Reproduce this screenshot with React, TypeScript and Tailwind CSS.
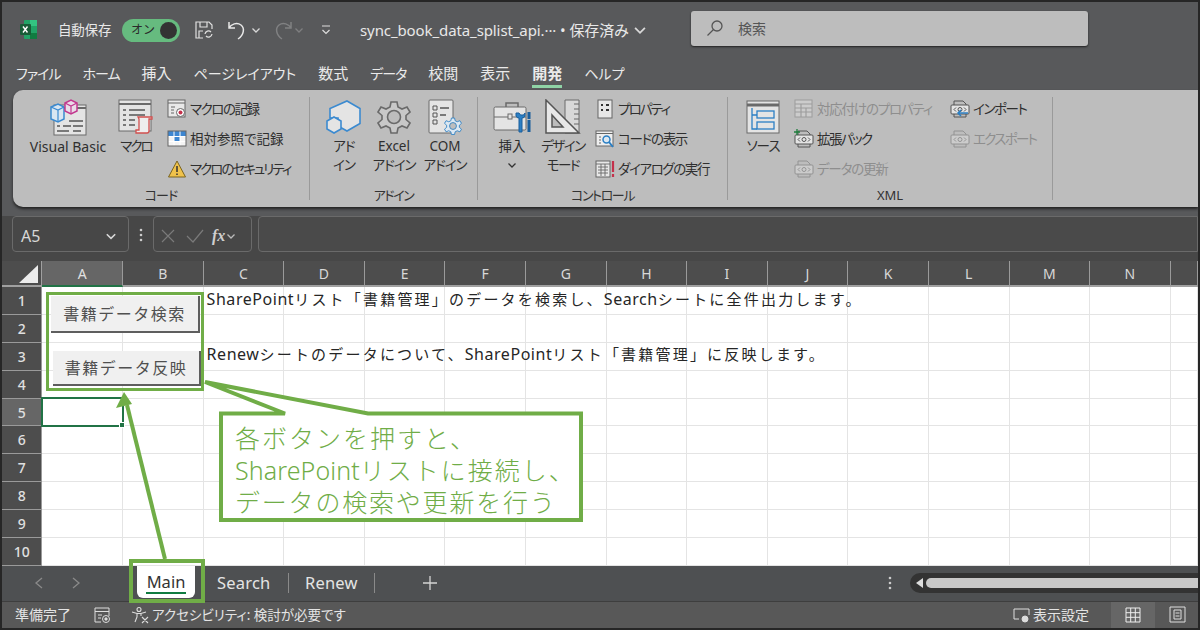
import React from "react";

const G = "#70ad47";

function Large({ w, label, icon, ml = "" }: { w: string; label: React.ReactNode; icon: React.ReactNode; ml?: string }) {
  return (
    <div className={`flex flex-col items-center shrink-0 ${w} ${ml}`}>
      <div className="h-[40px] flex items-center justify-center">{icon}</div>
      <div className="text-[13.5px] leading-[19px] text-center text-[#2f2f2f] whitespace-nowrap [font-feature-settings:'palt']">{label}</div>
    </div>
  );
}

function Small({ icon, label, off = false, t = "" }: { icon: React.ReactNode; label: string; off?: boolean; t?: string }) {
  return (
    <div className="h-[30px] flex items-center whitespace-nowrap">
      <div className="w-[20px] h-[20px] mr-[3px] flex items-center justify-center shrink-0">{icon}</div>
      <span className={`text-[13.5px] [font-feature-settings:'palt'] ${t} ${off ? "text-[#8e8e8e]" : "text-[#2f2f2f]"}`}>{label}</span>
    </div>
  );
}

function Group({ w, label, t = "", children }: { w: string; label: string; t?: string; children: React.ReactNode }) {
  return (
    <div className={`shrink-0 ${w} h-[103px] border-r border-[#9a9a9a] flex flex-col`}>
      <div className="flex-1 flex min-h-0">{children}</div>
      <div className={`text-center text-[13px] leading-[16px] text-[#333] -mb-[3px] [font-feature-settings:'palt'] ${t}`}>{label}</div>
    </div>
  );
}

const IconVB = () => (
  <svg width="38" height="38" viewBox="0 0 38 38" fill="none">
    <rect x="5" y="7" width="32" height="30" fill="#e4e4e4" stroke="#6a6a6a" />
    <path d="M5 10h32" stroke="#6a6a6a" strokeWidth="2" />
    <path d="M8 28h3M14 28h8M8 33h12M24 33h8M20 23h14M24 28h10" stroke="#555" strokeWidth="1.5" />
    <path d="M2 9l7-3 6 3v12l-6 3-7-3z" fill="#d9e6f2" stroke="#3b8ad0" strokeWidth="1.5" />
    <path d="M2 9l7 3 6-3M9 12v12" stroke="#3b8ad0" strokeWidth="1.2" />
    <path d="M16 5l6-3 6 3v8l-6 3-6-3z" fill="#eadce8" stroke="#c2388f" strokeWidth="1.5" />
    <path d="M16 5l6 3 6-3M22 8v8" stroke="#c2388f" strokeWidth="1.2" />
  </svg>
);
const IconMacro = () => (
  <svg width="36" height="36" viewBox="0 0 36 36" fill="none">
    <rect x="1" y="1" width="32" height="31" fill="#e4e4e4" stroke="#6a6a6a" />
    <path d="M1 5h32" stroke="#6a6a6a" strokeWidth="2" />
    <path d="M5 11h3M11 11h16M5 16h3M11 16h16M5 21h3M11 21h6M5 26h3M11 26h6" stroke="#555" strokeWidth="1.5" />
    <path d="M20 18h14v2h-3v12a2 2 0 01-2 2H18v-3h3V20z" fill="#eee" stroke="#d1504f" strokeWidth="1.3" />
  </svg>
);
const IconRec = () => (
  <svg width="20" height="20" viewBox="0 0 20 20" fill="none">
    <rect x="1" y="1" width="17" height="17" fill="#e8e8e8" stroke="#666" />
    <path d="M1 4h17M4 8h4M4 11h3M4 14h3" stroke="#666" />
    <circle cx="13.5" cy="13.5" r="4" fill="#fff" stroke="#666" />
    <circle cx="13.5" cy="13.5" r="2" fill="#c4314b" />
  </svg>
);
const IconRel = () => (
  <svg width="20" height="20" viewBox="0 0 20 20" fill="none">
    <rect x="1" y="2" width="18" height="15" fill="#f4f4f4" />
    <path d="M1 2h18v5H1zM7 7h6v5H7z" fill="#3d86d1" />
    <path d="M1 7.500h18M1 12.500h18M7 2v15M13 2v15" stroke="#fff" strokeWidth="1" />
    <rect x="1" y="2" width="18" height="15" stroke="#666" />
  </svg>
);
const IconWarn = () => (
  <svg width="20" height="20" viewBox="0 0 20 20" fill="none">
    <path d="M10 2l8.5 16h-17z" fill="#f0c24b" stroke="#7a6420" />
    <path d="M10 7v6M10 14.500v1.500" stroke="#333" strokeWidth="1.5" />
  </svg>
);
const IconAddin = () => (
  <svg width="38" height="36" viewBox="0 0 38 36" fill="none">
    <path d="M22 2l13 7.500v15L22 32l-9-5V19H5V9.500z" fill="#e4e4e4" stroke="#3b8ad0" strokeWidth="1.6" />
    <path d="M9 18l7 4v8l-7 4-7-4v-8z" fill="#e4e4e4" stroke="#3b8ad0" strokeWidth="1.6" />
  </svg>
);
const Gear = ({ s = 34, c = "#6a6a6a", fill = "#c8c8c8" }: { s?: number; c?: string; fill?: string }) => (
  <svg width={s} height={s} viewBox="0 0 34 34" fill="none">
    <path
      d="M14 2h6l1 5 4 2 5-2 3 5-4 3.500v4l4 3.500-3 5-5-2-4 2-1 5h-6l-1-5-4-2-5 2-3-5 4-3.500v-4L1 12l3-5 5 2 4-2z"
      fill={fill}
      stroke={c}
      strokeWidth="1.6"
    />
    <circle cx="17" cy="17" r="6.500" fill="#bdbdbd" stroke={c} strokeWidth="1.6" />
  </svg>
);
const IconCom = () => (
  <div className="relative w-[34px] h-[36px]">
    <svg width="34" height="36" viewBox="0 0 34 36" fill="none">
      <rect x="1" y="1" width="24" height="33" rx="1" fill="#e4e4e4" stroke="#6a6a6a" />
      <path d="M5 7h4v4H5zM5 14h4v4H5zM5 21h4v4H5z" stroke="#555" />
      <path d="M12 9h9M12 16h6" stroke="#555" strokeWidth="1.5" />
    </svg>
    <div className="absolute right-0 bottom-0">
      <Gear s={18} c="#2b7fc4" fill="#dce8f2" />
    </div>
  </div>
);
const IconInsert = () => (
  <svg width="38" height="34" viewBox="0 0 38 34" fill="none">
    <path d="M13 7V3h12v4" stroke="#6a6a6a" strokeWidth="1.5" />
    <rect x="1" y="7" width="32" height="23" rx="1.500" fill="#e4e4e4" stroke="#6a6a6a" />
    <path d="M1 17h32" stroke="#6a6a6a" />
    <rect x="15" y="14" width="4" height="5" fill="#e4e4e4" stroke="#6a6a6a" />
    <path d="M23 13v3a3 3 0 003 2v14h3V18a3 3 0 003-2v-3l-1.500 2h-3L26 13z" fill="#2b7fc4" stroke="#1b5f9c" />
    <path d="M36 12v7M36 20v12" stroke="#1b5f9c" strokeWidth="3" />
  </svg>
);
const IconDesign = () => (
  <svg width="36" height="36" viewBox="0 0 36 36" fill="none">
    <path d="M20 1h14v33H20z" fill="#d8d8d8" stroke="#6a6a6a" />
    <path d="M29 5h5M29 10h5M29 15h5M29 20h5M29 25h5" stroke="#666" />
    <path d="M1 1l33 33H1z" fill="#e8e8e8" stroke="#555" strokeWidth="1.5" />
    <path d="M7 16l11 12H7z" fill="#bdbdbd" stroke="#555" strokeWidth="1.5" />
  </svg>
);
const IconProp = () => (
  <svg width="18" height="20" viewBox="0 0 18 20" fill="none">
    <rect x="2" y="1" width="14" height="18" fill="#e8e8e8" stroke="#666" />
    <path d="M5 6h2M5 11h2M10 6h3M10 11h3" stroke="#333" strokeWidth="2" />
  </svg>
);
const IconCode = () => (
  <svg width="20" height="20" viewBox="0 0 20 20" fill="none">
    <rect x="1" y="2" width="17" height="15" fill="#eee" stroke="#666" />
    <path d="M1 4.500h17M4 8h2M4 11h2M4 14h2" stroke="#666" />
    <circle cx="11.500" cy="10.500" r="3.500" fill="#dce8f2" stroke="#2b7fc4" strokeWidth="1.5" />
    <path d="M14 13l4 5" stroke="#2b7fc4" strokeWidth="2" />
  </svg>
);
const IconDlg = () => (
  <svg width="20" height="20" viewBox="0 0 20 20" fill="none">
    <rect x="1" y="2" width="14" height="16" fill="#e8e8e8" stroke="#666" />
    <path d="M1 5h14M3 8h10M3 11h10M3 14h10M6 5v12M10 5v12" stroke="#666" strokeWidth="0.9" />
    <path d="M18 2v11M18 15v3" stroke="#c4314b" strokeWidth="2.2" />
  </svg>
);
const IconSource = () => (
  <svg width="34" height="34" viewBox="0 0 34 34" fill="none">
    <rect x="1" y="1" width="32" height="32" fill="#e4e4e4" stroke="#6a6a6a" />
    <path d="M1 5h32" stroke="#6a6a6a" strokeWidth="3" />
    <path d="M6 8v21h5M6 15h5" stroke="#2b7fc4" strokeWidth="1.3" />
    <rect x="11" y="11" width="17" height="7" stroke="#2b7fc4" strokeWidth="1.3" />
    <rect x="11" y="22" width="17" height="7" stroke="#2b7fc4" strokeWidth="1.3" />
  </svg>
);
const IconMap = () => (
  <svg width="20" height="20" viewBox="0 0 20 20" fill="none" opacity="0.45">
    <rect x="1" y="1" width="17" height="17" fill="#e0e0e0" stroke="#777" />
    <path d="M1 5h17M1 9h17M1 13h17M7 5v13M12 9v9" stroke="#777" strokeWidth="1.2" />
  </svg>
);
const Xml = ({ tone = "#555", over }: { tone?: string; over?: React.ReactNode }) => (
  <svg width="20" height="20" viewBox="0 0 20 20" fill="none">
    <path d="M4 6V2h9l3 3v1" stroke={tone} />
    <rect x="1" y="6" width="18" height="9" rx="1" fill="#e4e4e4" stroke={tone} />
    <path d="M6 8.500l-2 2 2 2M14 8.500l2 2-2 2" stroke={tone} />
    <circle cx="10" cy="10.500" r="2" stroke={tone} />
    <path d="M4 15v3h12v-3" stroke={tone} />
    {over}
  </svg>
);

const Chevron = ({ c = "#d8d8d8", s = 10 }: { c?: string; s?: number }) => (
  <svg width={s} height={s} viewBox="0 0 10 10" fill="none">
    <path d="M1.500 3.500L5 7l3.500-3.500" stroke={c} strokeWidth="1.300" />
  </svg>
);

const cols = ["A", "B", "C", "D", "E", "F", "G", "H", "I", "J", "K", "L", "M", "N", "O"];
const rows = [1, 2, 3, 4, 5, 6, 7, 8, 9, 10];
const menus: [string, string][] = [
  ["ファイル", "text-[14px] tracking-[-1px]"],
  ["ホーム", "text-[14px] tracking-[-1px]"],
  ["挿入", "text-[15px]"],
  ["ページレイアウト", "text-[14px]"],
  ["数式", "text-[15px]"],
  ["データ", "text-[14px] tracking-[-1px]"],
  ["校閲", "text-[15px]"],
  ["表示", "text-[15px]"],
];
const kana = "tracking-[-1px]";

export default function App() {
  return (
    <div className="relative w-[1200px] h-[630px] overflow-hidden bg-[#58595b] border-2 border-[#262626] [font-family:'Noto_Sans','Noto_Sans_CJK_JP',sans-serif] text-[#e8e8e8]">
      {/* Title bar */}
      <div className="h-[56px] flex items-center">
        <svg className="ml-[18px] mt-[-2px]" width="17" height="19" viewBox="0 0 17 19">
          <rect x="4" y="0" width="13" height="19" rx="1" fill="#21a366" />
          <rect x="10" y="0" width="7" height="6" fill="#33c481" />
          <rect x="10" y="13" width="7" height="6" fill="#107c41" />
          <rect x="0" y="4" width="11" height="11" rx="1" fill="#185c37" />
          <path d="M3 6.500l4.500 6M7.500 6.500L3 12.500" stroke="#fff" strokeWidth="1.400" />
        </svg>
        <span className="ml-[21px] text-[13.5px] tracking-[-0.2px] w-[54px] whitespace-nowrap">自動保存</span>
        <div className="ml-[10px] w-[58px] h-[23px] rounded-full bg-[#66bb7f] flex items-center justify-between pl-[9px] pr-[3px] shrink-0">
          <span className="text-[12px] text-[#2a2a2a]">オン</span>
          <div className="w-[17px] h-[17px] rounded-full bg-[#333]" />
        </div>
        <svg className="ml-[14px]" width="20" height="20" viewBox="0 0 20 20" fill="none" stroke="#e0e0e0" strokeWidth="1.200">
          <path d="M9 18H2V2h13l3 3v4M6 2v5h7V2M5 18v-7h4" />
          <path d="M11 14a3.500 3.500 0 016-2M18 14a3.500 3.500 0 01-6 2" />
        </svg>
        <svg className="ml-[13px]" width="22" height="22" viewBox="0 0 22 22" fill="none" stroke="#e8e8e8" strokeWidth="1.500">
          <path d="M2 3v6h6M2 9c2-4 8-6 12-3s3 10-3 14" />
        </svg>
        <div className="ml-[2px]"><Chevron /></div>
        <svg className="ml-[10px] opacity-30" width="22" height="22" viewBox="0 0 22 22" fill="none" stroke="#ddd" strokeWidth="1.500">
          <path d="M20 3v6h-6M20 9c-2-4-8-6-12-3s-3 10 3 14" />
        </svg>
        <div className="ml-[1px] opacity-30"><Chevron /></div>
        <svg className="ml-[16px]" width="12" height="12" viewBox="0 0 12 12" fill="none" stroke="#ddd" strokeWidth="1.200">
          <path d="M2 2h8M2.500 6L6 9.500 9.500 6" />
        </svg>
        <span className="ml-[28px] text-[15px] whitespace-nowrap w-[290px] shrink-0 tracking-[-0.1px] flex items-center gap-[4px]">
          sync_book_data_splist_api.··· • 保存済み <Chevron s={14} />
        </span>
        <div className="ml-[41px] w-[397px] h-[35px] mt-[-4px] rounded-[3px] bg-[#bdbdbd] shadow-[0_1px_2px_#222] flex items-center text-[#555] shrink-0">
          <svg className="ml-[15px]" width="18" height="18" viewBox="0 0 18 18" fill="none" stroke="#555" strokeWidth="1.300">
            <circle cx="11" cy="7" r="5" />
            <path d="M7.500 10.500L1.500 16.500" />
          </svg>
          <span className="ml-[14px] text-[14px]">検索</span>
        </div>
      </div>

      {/* Menu tabs */}
      <div className="h-[32px] flex items-center pl-[14px] gap-[22px] [font-feature-settings:'palt'] text-[#eaeaea] whitespace-nowrap pb-[2px]">
        {menus.map(([m, c]) => (
          <span key={m} className={c}>{m}</span>
        ))}
        <span className="relative font-bold text-[15px]">
          開発
          <span className="absolute left-0 right-0 -bottom-[4px] h-[3px] bg-[#8fd3a6]" />
        </span>
        <span className="text-[14px]">ヘルプ</span>
      </div>

      {/* Ribbon */}
      <div className="ml-[11px] h-[117px] rounded-l-[10px] bg-[#bdbdbd] shadow-[0_2px_3px_#222] flex items-start pt-[7px] text-[#2f2f2f]">
        <Group w="w-[297px]" label="コード" t={kana}>
          <Large w="w-[86px]" ml="ml-[12px]" label={<span className="text-[14px]">Visual Basic</span>} icon={<IconVB />} />
          <Large w="w-[50px]" label={<span className="tracking-[-2px]">マクロ</span>} icon={<IconMacro />} />
          <div className="ml-[6px] -mt-[3px]">
            <Small icon={<IconRec />} label="マクロの記録" t="tracking-[-1.5px]" />
            <Small icon={<IconRel />} label="相対参照で記録" />
            <Small icon={<IconWarn />} label="マクロのセキュリティ" t="tracking-[-2px]" />
          </div>
        </Group>
        <Group w="w-[168px]" label="アドイン" t="tracking-[-1.4px]">
          <Large w="w-[50px]" ml="ml-[9px]" label={<span className={kana}>アド<br />イン</span>} icon={<IconAddin />} />
          <Large w="w-[50px]" label={<>Excel<br /><span className={kana}>アドイン</span></>} icon={<Gear />} />
          <Large w="w-[52px]" label={<>COM<br /><span className={kana}>アドイン</span></>} icon={<IconCom />} />
        </Group>
        <Group w="w-[250px]" label="コントロール" t="tracking-[-1.4px]">
          <Large w="w-[52px]" ml="ml-[8px]" label={<>挿入<br /><span className="inline-block"><Chevron c="#333" /></span></>} icon={<IconInsert />} />
          <Large w="w-[50px]" label={<span className="tracking-[-1.5px]">デザイン<br />モード</span>} icon={<IconDesign />} />
          <div className="ml-[7px] -mt-[3px]">
            <Small icon={<IconProp />} label="プロパティ" t="tracking-[-1.8px]" />
            <Small icon={<IconCode />} label="コードの表示" t="tracking-[-1.3px]" />
            <Small icon={<IconDlg />} label="ダイアログの実行" t="tracking-[-1.4px]" />
          </div>
        </Group>
        <Group w="w-[325px]" label="XML">
          <Large w="w-[50px]" ml="ml-[10px]" label={<span className={kana}>ソース</span>} icon={<IconSource />} />
          <div className="ml-[6px] w-[156px] -mt-[3px]">
            <Small off icon={<IconMap />} label="対応付けのプロパティ" t="tracking-[-1.2px]" />
            <Small icon={<Xml over={<path d="M3 0v6M0 3h6" stroke="#1e7d3c" strokeWidth="1.300" />} />} label="拡張パック" t="tracking-[-1.6px]" />
            <Small off icon={<div className="opacity-40"><Xml /></div>} label="データの更新" t="tracking-[-1.2px]" />
          </div>
          <div className="-mt-[3px]">
            <Small icon={<Xml over={<path d="M18 14H8M11 11l-3 3 3 3" stroke="#2b7fc4" strokeWidth="1.500" />} />} label="インポート" t="tracking-[-1.4px]" />
            <Small off icon={<div className="opacity-40"><Xml /></div>} label="エクスポート" t="tracking-[-1.7px]" />
          </div>
        </Group>
      </div>

      {/* Formula bar */}
      <div className="mt-[9px] h-[45px] bg-[#474747] flex items-start">
        <div className="ml-[10px] w-[117px] h-[36px] rounded-[4px] border border-[#6a6a6a] flex items-center justify-between pl-[8px] pr-[11px] pt-[4px] text-[#d8d8d8] text-[16px]">
          A5
          <Chevron s={12} />
        </div>
        <svg className="ml-[10px] mt-[12px]" width="4" height="14" viewBox="0 0 4 14" fill="#ccc">
          <circle cx="2" cy="2" r="1.300" />
          <circle cx="2" cy="7" r="1.300" />
          <circle cx="2" cy="12" r="1.300" />
        </svg>
        <div className="ml-[10px] w-[99px] h-[36px] rounded-[4px] border border-[#6a6a6a] flex items-center pl-[6px] pt-[3px] gap-[10px]">
          <svg width="16" height="16" viewBox="0 0 16 16" fill="none" stroke="#7a7a7a" strokeWidth="1.200">
            <path d="M2 2l12 12M14 2L2 14" />
          </svg>
          <svg width="18" height="16" viewBox="0 0 18 16" fill="none" stroke="#7a7a7a" strokeWidth="1.200">
            <path d="M1 8l6 6L17 2" />
          </svg>
          <span className="[font-family:'Liberation_Serif',serif] italic font-bold text-[16px] text-[#cfcfcf] -ml-[2px]">fx</span>
          <div className="-ml-[9px]"><Chevron c="#bbb" /></div>
        </div>
        <div className="ml-[6px] flex-1 h-[36px] rounded-l-[4px] border border-[#6a6a6a] bg-[#4a4a4a]" />
      </div>

      {/* Grid */}
      <div className="relative grid grid-cols-[40.4px_repeat(14,80.6px)_1fr] grid-rows-[26px_repeat(10,27.9px)] bg-white overflow-hidden">
        <div className="relative bg-[#4d4d4d] border-b-2 border-r border-[#a0a0a0]">
          <div className="absolute right-[3px] bottom-[2px] w-0 h-0 border-l-[19px] border-l-transparent border-b-[18px] border-b-[#ececec]" />
        </div>
        {cols.map((c, i) => (
          <div
            key={c}
            className={`flex items-center justify-center text-[14px] border-r border-[#9a9a9a] ${
              i === 0 ? "bg-[#666] border-b-2 border-b-[#217346] text-[#e0e0e0]" : "bg-[#4d4d4d] border-b-2 border-b-[#a0a0a0] text-[#d8d8d8]"
            }`}
          >
            {i < 14 ? c : ""}
          </div>
        ))}
        {rows.map((r) => (
          <React.Fragment key={r}>
            <div
              className={`flex items-center justify-center text-[14px] font-medium border-b border-r border-[#9a9a9a] text-[#e0e0e0] ${
                r === 5 ? "bg-[#666]" : "bg-[#4d4d4d]"
              }`}
            >
              {r}
            </div>
            {cols.map((c, i) => (
              <div key={c} className={`relative border-r border-b border-[#e4e4e4] ${i === 2 ? "z-10" : ""}`}>
                {i === 2 && r === 1 && (
                  <span className="absolute left-[3px] top-0 whitespace-nowrap text-[15px] leading-[24px] tracking-[2.2px] text-[#262626]">
                    <span className="text-[16px] tracking-[0.55px]">SharePoint</span>リスト「書籍管理」のデータを検索し、<span className="text-[16px] tracking-[0.55px]">Search</span>シートに全件出力します。
                  </span>
                )}
                {i === 2 && r === 3 && (
                  <span className="absolute left-[3px] -top-[1px] whitespace-nowrap text-[15px] leading-[24px] tracking-[2.2px] text-[#262626]">
                    <span className="text-[16px] tracking-[0.55px]">Renew</span>シートのデータについて、<span className="text-[16px] tracking-[0.55px]">SharePoint</span>リスト「書籍管理」に反映します。
                  </span>
                )}
              </div>
            ))}
          </React.Fragment>
        ))}
      </div>

      {/* Sheet tabs */}
      <div className="h-[36px] bg-[#4e5052] flex items-center border-b border-[#3e3e3e]">
        <svg className="ml-[31px]" width="12" height="14" viewBox="0 0 12 14" fill="none" stroke="#8a8a8a" strokeWidth="1.300">
          <path d="M9 2L3 7l6 5" />
        </svg>
        <svg className="ml-[25px]" width="12" height="14" viewBox="0 0 12 14" fill="none" stroke="#8a8a8a" strokeWidth="1.300">
          <path d="M3 2l6 5-6 5" />
        </svg>
        <div className="ml-[55px] w-[58px] h-[32px] self-start bg-white rounded-b-[6px] relative flex items-center justify-center text-[16.5px] text-[#333]">
          Main
          <span className="absolute left-[9px] right-[9px] bottom-[4px] h-[2px] bg-[#107c41]" />
        </div>
        <span className="ml-[22px] text-[16.5px] tracking-[0.2px] text-[#e4e4e4] w-[54px]">Search</span>
        <span className="ml-[17px] w-px h-[20px] bg-[#8a8a8a]" />
        <span className="ml-[16px] text-[16.5px] tracking-[0.2px] text-[#e4e4e4] w-[53px]">Renew</span>
        <span className="ml-[16px] w-px h-[20px] bg-[#8a8a8a]" />
        <svg className="ml-[48px]" width="14" height="14" viewBox="0 0 14 14" stroke="#d4d4d4" strokeWidth="1.300">
          <path d="M7 0v14M0 7h14" />
        </svg>
        <svg className="ml-[451px]" width="4" height="14" viewBox="0 0 4 14" fill="#ccc">
          <circle cx="2" cy="2" r="1.300" />
          <circle cx="2" cy="7" r="1.300" />
          <circle cx="2" cy="12" r="1.300" />
        </svg>
        <div className="ml-[18px] flex-1 h-[20px] rounded-l-full bg-[#333] flex items-center pl-[6px]">
          <div className="w-0 h-0 border-y-[5px] border-y-transparent border-r-[7px] border-r-[#ddd]" />
          <div className="ml-[3px] flex-1 h-[10px] rounded-l-full bg-[#c8c8c8]" />
        </div>
      </div>

      {/* Status bar */}
      <div className="h-[26px] bg-[#585858] flex items-center text-[14px] text-[#e4e4e4]">
        <span className="ml-[13px] w-[56px] whitespace-nowrap">準備完了</span>
        <svg className="ml-[22px]" width="18" height="18" viewBox="0 0 18 18" fill="none" stroke="#ddd">
          <path d="M8 16H2V2h14v8M2 5.500h14M5 9h4M5 12h3" />
          <circle cx="13" cy="13" r="3.500" />
          <circle cx="13" cy="13" r="1.200" fill="#ddd" />
        </svg>
        <svg className="ml-[20px]" width="18" height="18" viewBox="0 0 18 18" fill="none" stroke="#ddd" strokeWidth="1.100">
          <circle cx="8" cy="3.500" r="2" />
          <path d="M1 6l5 1.500h4L15 6M6 7.500V11l-2 5M10 7.500V10M11 11l6 6M17 11l-6 6" />
        </svg>
        <span className="ml-[3px] w-[190px] text-[13.5px] [font-feature-settings:'palt'] whitespace-nowrap">アクセシビリティ: 検討が必要です</span>
        <svg className="ml-[671px]" width="18" height="18" viewBox="0 0 18 18" fill="none" stroke="#ddd">
          <path d="M6 13H1V3h15v6" />
          <circle cx="12" cy="13" r="3" fill="#ddd" />
        </svg>
        <span className="ml-[2px] w-[58px] whitespace-nowrap">表示設定</span>
        <div className="ml-[20px] w-[44px] h-full bg-[#666] flex items-center justify-center">
          <svg width="16" height="16" viewBox="0 0 16 16" fill="none" stroke="#eee">
            <path d="M1 1h14v14H1zM1 5.700h14M1 10.300h14M5.700 1v14M10.300 1v14" />
          </svg>
        </div>
        <div className="ml-[14px]">
          <svg width="17" height="17" viewBox="0 0 17 17" fill="none" stroke="#ddd">
            <path d="M1 1h15v15H1zM5 4h7v9H5zM6.500 7h4M6.500 10h4" />
          </svg>
        </div>
      </div>

      {/* Annotations */}
      <div className="absolute left-[44px] top-[290px] w-[158px] h-[99px] border-[3.5px] border-[#70ad47] z-20" />
      <div className="absolute left-[49px] top-[294px] w-[149px] h-[37px] bg-[#f0f0f0] border-r-2 border-b-2 border-[#5e5e5e] z-20 flex items-center justify-center text-[16px] tracking-[1.5px] text-[#505050]">
        書籍データ検索
      </div>
      <div className="absolute left-[51px] top-[349px] w-[148px] h-[35px] bg-[#f0f0f0] border-r-2 border-b-2 border-[#5e5e5e] z-20 flex items-center justify-center text-[16px] tracking-[1.5px] text-[#505050]">
        書籍データ反映
      </div>
      {/* Selected cell */}
      <div className="absolute left-[39px] top-[395px] w-[83px] h-[30px] border-2 border-[#217346] z-20">
        <div className="absolute -right-[3px] -bottom-[3px] w-[6px] h-[6px] bg-[#217346] border border-white" />
      </div>

      <svg className="absolute left-[-2px] top-[-2px] z-30 pointer-events-none" width="1200" height="630" viewBox="0 0 1200 630" fill="none">
        <path d="M221 413.500H285L205 382l163 31.500H581V520H221z" fill="#fff" stroke={G} strokeWidth="4" />
        <path d="M165 559L127 405" stroke={G} strokeWidth="4" />
        <path d="M124 392l-8 16 16-4z" fill={G} />
        <path d="M131 561H203V601H131z" stroke={G} strokeWidth="4" />
      </svg>
      <div className="absolute left-[233px] top-[420px] z-40 text-[25px] leading-[32px] tracking-[2px] text-[#70ad47] whitespace-nowrap font-light">
        各ボタンを押すと、
        <br />
        <span className="tracking-[0.1px]">SharePoint</span>リストに接続し、
        <br />
        <span className="tracking-[1.8px]">データの検索や更新を行う</span>
      </div>
    </div>
  );
}
